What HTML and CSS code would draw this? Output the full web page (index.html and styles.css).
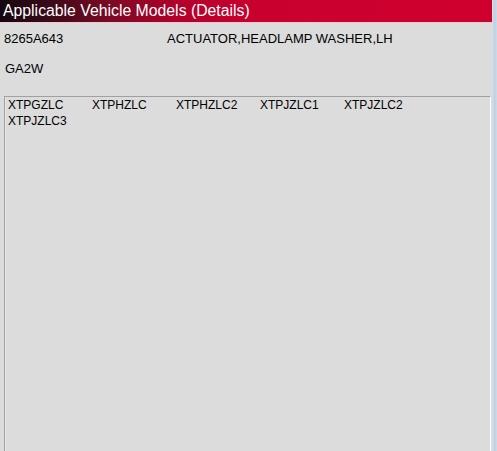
FILE: index.html
```html
<!DOCTYPE html>
<html>
<head>
<meta charset="utf-8">
<link rel="stylesheet" href="styles.css">
</head>
<body>
<div class="screen">
  <div class="main">
    <div class="titlebar">Applicable Vehicle Models (Details)</div>
    <div class="row row-part">
      <span class="part-no">8265A643</span>
      <span class="part-name">ACTUATOR,HEADLAMP WASHER,LH</span>
    </div>
    <div class="row row-code">GA2W</div>
    <div class="listbox">
      <span class="item">XTPGZLC</span>
      <span class="item">XTPHZLC</span>
      <span class="item">XTPHZLC2</span>
      <span class="item">XTPJZLC1</span>
      <span class="item">XTPJZLC2</span>
      <span class="item">XTPJZLC3</span>
    </div>
  </div>
  <div class="edge"></div>
</div>
</body>
</html>
```
FILE: styles.css
```css
html, body {
  margin: 0;
  padding: 0;
  background: #dcdcdc;
}
.screen {
  display: flex;
  width: 497px;
  height: 451px;
  overflow: hidden;
  font-family: "Liberation Sans", Arial, sans-serif;
  color: #000;
}
.main {
  width: 492px;
  flex: none;
  display: flex;
  flex-direction: column;
  background: #dcdcdc;
}
.edge {
  flex: 1;
  background: linear-gradient(to right, #d6dee8 0px, #c4d4e4 2px, #bfd0e2 3px, #cfdbe8 5px);
}
.titlebar {
  height: 22px;
  line-height: 22px;
  padding-left: 3px;
  font-size: 15.8px;
  color: #fff;
  background: linear-gradient(to right, #140810 0%, #3a0a18 10%, #7a0a24 22%, #b2002a 36%, #c8002e 50%, #d0002e 100%);
  border-bottom: 1px solid #f0c8d0;
  white-space: nowrap;
}
.row {
  font-size: 13px;
  line-height: 16px;
  padding-left: 4px;
}
.row-part {
  margin-top: 8px;
  display: grid;
  grid-template-columns: 163px auto;
}
.row-code {
  margin-top: 14px;
  padding-left: 5px;
}
.listbox {
  margin-top: 19px;
  margin-left: 4px;
  width: 482px;
  flex: 1;
  border-top: 1px solid #a0a0a0;
  border-left: 1px solid #a0a0a0;
  border-right: 1px solid #ffffff;
  box-shadow: inset 1px 0 0 #e8e8e8;
  padding: 0 0 0 3px;
  display: grid;
  grid-template-columns: repeat(5, 84px);
  grid-auto-rows: 16px;
  align-content: start;
  font-size: 12px;
  line-height: 16px;
}
.item {
  white-space: nowrap;
}
```
